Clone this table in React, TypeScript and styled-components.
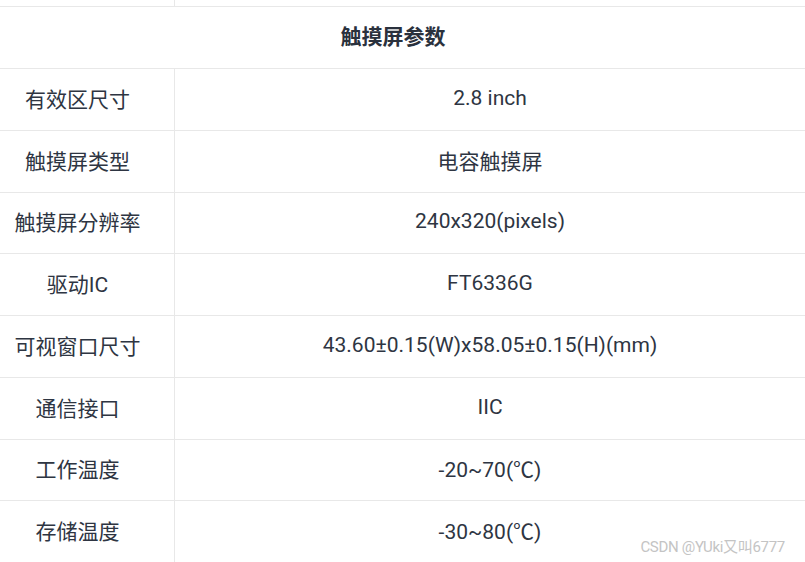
import styled, { createGlobalStyle } from 'styled-components';

const GlobalStyle = createGlobalStyle`
    html, body {
        margin: 0;
        padding: 0;
        background: #ffffff;
        overflow: hidden;
    }
`

const Page = styled.div`
    position: relative;
    width: 805px;
    height: 562px;
    overflow: hidden;
    font-family: Roboto, "Noto Sans CJK SC", sans-serif;
    color: #2e3542;
`

const Table = styled.div`
    display: grid;
    grid-template-columns: 194px 1fr;
    width: 824px;
    margin-left: -19px;
`

const Cell = styled.div<{ $first?: boolean; $h?: number }>`
    height: ${p => p.$h ?? 61.75}px;
    box-sizing: border-box;
    display: flex;
    align-items: center;
    justify-content: center;
    padding-bottom: ${p => (p.$h ? 0 : 3)}px;
    border-bottom: 1px solid #e8e8e8;
    border-right: ${p => (p.$first ? '1px solid #e8e8e8' : 'none')};
    font-size: 21px;
    white-space: nowrap;
`

const HeaderCell = styled.div`
    grid-column: 1 / span 2;
    height: 62px;
    box-sizing: border-box;
    display: flex;
    align-items: center;
    justify-content: center;
    padding-bottom: 6px;
    border-bottom: 1px solid #e8e8e8;
    font-size: 21px;
    font-weight: 700;
    color: #2a313d;
`

const Watermark = styled.div`
    position: absolute;
    right: 20px;
    bottom: 6px;
    font-size: 15px;
    color: #c4c4c4;
    letter-spacing: -0.3px;
    text-shadow: 0 0 1px rgba(255, 255, 255, 0.9);
`

const rows: [string, string][] = [
    ['有效区尺寸', '2.8 inch'],
    ['触摸屏类型', '电容触摸屏'],
    ['触摸屏分辨率', '240x320(pixels)'],
    ['驱动IC', 'FT6336G'],
    ['可视窗口尺寸', '43.60±0.15(W)x58.05±0.15(H)(mm)'],
    ['通信接口', 'IIC'],
    ['工作温度', '-20~70(℃)'],
    ['存储温度', '-30~80(℃)'],
]

export default function App() {
    return (
        <Page>
            <GlobalStyle />
            <Table>
                <Cell $first $h={7} />
                <Cell $h={7} />
                <HeaderCell>触摸屏参数</HeaderCell>
                {rows.map(([k, v]) => (
                    <>
                        <Cell key={k} $first>{k}</Cell>
                        <Cell key={k + '-v'}>{v}</Cell>
                    </>
                ))}
            </Table>
            <Watermark>CSDN @YUki又叫6777</Watermark>
        </Page>
    )
}
